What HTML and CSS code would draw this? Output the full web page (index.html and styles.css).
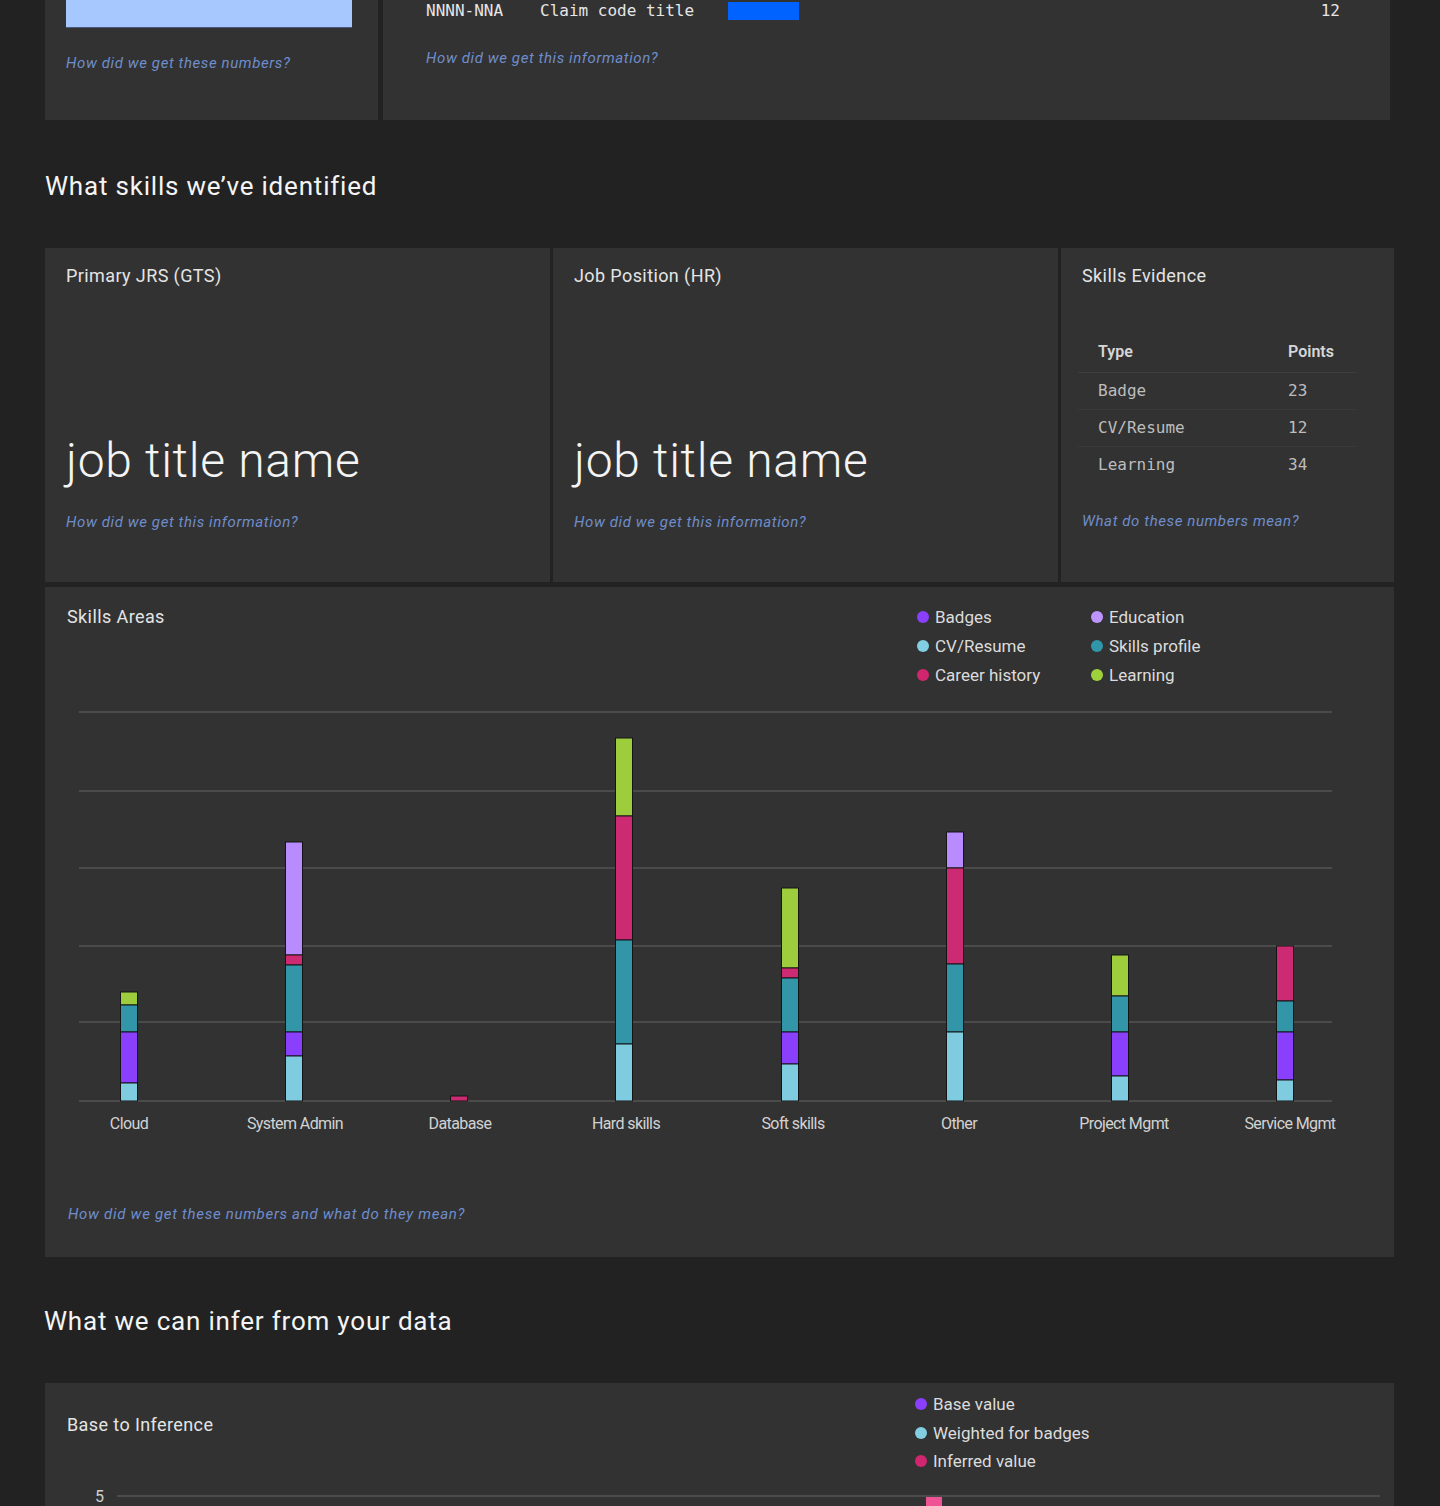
FILE: index.html
```html
<!DOCTYPE html>
<html lang="en">
<head>
<meta charset="utf-8">
<title>Skills summary</title>
<link rel="stylesheet" href="styles.css">
</head>
<body>
<main class="page">
  <section class="top-row">
    <div class="card card-small">
      <div class="light-bar"></div>
      <a class="info-link link-top-left">How did we get these numbers?</a>
    </div>
    <div class="card card-claim">
      <div class="claim-row">
        <span class="mono claim-code">NNNN-NNA</span>
        <span class="mono claim-title">Claim code title</span>
        <span class="claim-bar"></span>
        <span class="mono claim-num">12</span>
      </div>
      <a class="info-link link-top-right">How did we get this information?</a>
    </div>
  </section>

  <h2 class="section-heading heading-skills">What skills we’ve identified</h2>

  <section class="cards-row">
    <div class="card card-job">
      <h3 class="card-title">Primary JRS (GTS)</h3>
      <p class="job-title">job title name</p>
      <a class="info-link">How did we get this information?</a>
    </div>
    <div class="card card-job">
      <h3 class="card-title">Job Position (HR)</h3>
      <p class="job-title">job title name</p>
      <a class="info-link">How did we get this information?</a>
    </div>
    <div class="card card-evidence">
      <h3 class="card-title">Skills Evidence</h3>
      <table class="evidence-table">
        <thead>
          <tr><th>Type</th><th>Points</th></tr>
        </thead>
        <tbody>
          <tr><td class="mono">Badge</td><td class="mono">23</td></tr>
          <tr><td class="mono">CV/Resume</td><td class="mono">12</td></tr>
          <tr><td class="mono">Learning</td><td class="mono">34</td></tr>
        </tbody>
      </table>
      <a class="info-link">What do these numbers mean?</a>
    </div>
  </section>

  <section class="card card-areas">
    <div class="areas-head">
      <h3 class="card-title">Skills Areas</h3>
      <ul class="legend legend-grid">
        <li><span class="dot c-purple"></span>Badges</li>
        <li><span class="dot c-lavender"></span>Education</li>
        <li><span class="dot c-light"></span>CV/Resume</li>
        <li><span class="dot c-teal"></span>Skills profile</li>
        <li><span class="dot c-pink"></span>Career history</li>
        <li><span class="dot c-green"></span>Learning</li>
      </ul>
    </div>
    <svg class="areas-chart" width="1349" height="450" viewBox="0 0 1349 450">
      <g class="grid">
        <line x1="34" x2="1287" y1="23" y2="23"/>
        <line x1="34" x2="1287" y1="102" y2="102"/>
        <line x1="34" x2="1287" y1="179" y2="179"/>
        <line x1="34" x2="1287" y1="257" y2="257"/>
        <line x1="34" x2="1287" y1="333" y2="333"/>
        <line x1="34" x2="1287" y1="412" y2="412"/>
      </g>
      <g class="bars">
        <!-- Cloud -->
        <rect class="s-green" x="75.5" y="303" width="17" height="13"/>
        <rect class="s-teal" x="75.5" y="316" width="17" height="27"/>
        <rect class="s-purple" x="75.5" y="343" width="17" height="51"/>
        <rect class="s-light" x="75.5" y="394" width="17" height="18"/>
        <!-- System Admin -->
        <rect class="s-lavender" x="240.5" y="153" width="17" height="113"/>
        <rect class="s-pink" x="240.5" y="266" width="17" height="10"/>
        <rect class="s-teal" x="240.5" y="276" width="17" height="67"/>
        <rect class="s-purple" x="240.5" y="343" width="17" height="24"/>
        <rect class="s-light" x="240.5" y="367" width="17" height="45"/>
        <!-- Database -->
        <rect class="s-pink" x="405.5" y="407" width="17" height="5"/>
        <!-- Hard skills -->
        <rect class="s-green" x="570.5" y="49" width="17" height="78"/>
        <rect class="s-pink" x="570.5" y="127" width="17" height="124"/>
        <rect class="s-teal" x="570.5" y="251" width="17" height="104"/>
        <rect class="s-light" x="570.5" y="355" width="17" height="57"/>
        <!-- Soft skills -->
        <rect class="s-green" x="736.5" y="199" width="17" height="80"/>
        <rect class="s-pink" x="736.5" y="279" width="17" height="10"/>
        <rect class="s-teal" x="736.5" y="289" width="17" height="54"/>
        <rect class="s-purple" x="736.5" y="343" width="17" height="32"/>
        <rect class="s-light" x="736.5" y="375" width="17" height="37"/>
        <!-- Other -->
        <rect class="s-lavender" x="901.5" y="143" width="17" height="36"/>
        <rect class="s-pink" x="901.5" y="179" width="17" height="96"/>
        <rect class="s-teal" x="901.5" y="275" width="17" height="68"/>
        <rect class="s-light" x="901.5" y="343" width="17" height="69"/>
        <!-- Project Mgmt -->
        <rect class="s-green" x="1066.5" y="266" width="17" height="41"/>
        <rect class="s-teal" x="1066.5" y="307" width="17" height="36"/>
        <rect class="s-purple" x="1066.5" y="343" width="17" height="44"/>
        <rect class="s-light" x="1066.5" y="387" width="17" height="25"/>
        <!-- Service Mgmt -->
        <rect class="s-pink" x="1231.5" y="257" width="17" height="55"/>
        <rect class="s-teal" x="1231.5" y="312" width="17" height="31"/>
        <rect class="s-purple" x="1231.5" y="343" width="17" height="48"/>
        <rect class="s-light" x="1231.5" y="391" width="17" height="21"/>
      </g>
      <g class="axis-labels">
        <text x="84" y="440">Cloud</text>
        <text x="250" y="440">System Admin</text>
        <text x="415" y="440">Database</text>
        <text x="581" y="440">Hard skills</text>
        <text x="748" y="440">Soft skills</text>
        <text x="914" y="440">Other</text>
        <text x="1079" y="440">Project Mgmt</text>
        <text x="1245" y="440">Service Mgmt</text>
      </g>
    </svg>
    <a class="info-link link-areas">How did we get these numbers and what do they mean?</a>
  </section>

  <h2 class="section-heading heading-infer">What we can infer from your data</h2>

  <section class="card card-inference">
    <div class="inference-head">
      <h3 class="card-title inference-title">Base to Inference</h3>
      <ul class="legend legend-list">
        <li><span class="dot c-purple"></span>Base value</li>
        <li><span class="dot c-light"></span>Weighted for badges</li>
        <li><span class="dot c-pink"></span>Inferred value</li>
      </ul>
    </div>
    <svg class="inference-chart" width="1349" height="200" viewBox="0 0 1349 200">
      <text class="y-label" x="50" y="26">5</text>
      <line class="grid-line" x1="72" x2="1335" y1="20" y2="20"/>
      <rect class="s-pinkbright" x="881" y="21" width="16" height="60"/>
    </svg>
  </section>
</main>
</body>
</html>
```

FILE: styles.css
```css
* {
  box-sizing: border-box;
}

html, body {
  margin: 0;
  padding: 0;
  background: #222222;
}

body {
  font-family: Roboto, "Noto Sans", "Liberation Sans", sans-serif;
  color: #f2f2f2;
  overflow: hidden;
}

.page {
  width: 1440px;
  padding-left: 45px;
}

.mono {
  font-family: "DejaVu Sans Mono", "Liberation Mono", monospace;
}

.card {
  background: #323232;
}

.info-link {
  display: block;
  font-style: italic;
  font-size: 15px;
  line-height: 20px;
  letter-spacing: 0.6px;
  color: #6f8dcb;
  text-decoration: none;
}

/* ---------- top row ---------- */
.top-row {
  display: flex;
  gap: 5px;
  height: 120px;
}

.card-small {
  width: 333px;
  padding: 0 26px 0 21px;
}

.light-bar {
  height: 28px;
  background: #a6c8ff;
  border-bottom: 1px solid #4a5a78;
}

.link-top-left {
  margin-top: 25px;
}

.card-claim {
  width: 1007px;
  padding: 0 50px 0 43px;
}

.claim-row {
  display: flex;
  align-items: center;
  height: 21px;
  font-size: 16px;
  color: #e6e6e6;
}

.claim-code {
  width: 114px;
}

.claim-title {
  width: 188px;
}

.claim-bar {
  width: 71px;
  height: 18px;
  background: #0062ff;
  margin-top: 1px;
}

.claim-num {
  margin-left: auto;
}

.link-top-right {
  margin-top: 27px;
}

/* ---------- headings ---------- */
.section-heading {
  margin: 0;
  font-size: 26px;
  line-height: 32px;
  font-weight: 400;
  letter-spacing: 0.8px;
  color: #f4f4f4;
}

.heading-skills {
  margin-top: 50px;
  margin-bottom: 46px;
}

.heading-infer {
  margin-top: 48px;
  margin-bottom: 46px;
  margin-left: -1px;
}

/* ---------- cards row ---------- */
.cards-row {
  display: flex;
  gap: 3px;
  height: 334px;
}

.card-title {
  margin: 0;
  font-size: 18px;
  line-height: 24px;
  font-weight: 400;
  letter-spacing: 0.4px;
  color: #e4e4e4;
}

.card-job {
  width: 505px;
  padding: 16px 21px 0;
  display: flex;
  flex-direction: column;
}

.job-title {
  margin: 145px 0 0;
  font-size: 48px;
  line-height: 56px;
  font-weight: 300;
  letter-spacing: 0.7px;
  color: #f4f4f4;
}

.card-job .info-link {
  margin-top: 23px;
}

.card-evidence {
  width: 333px;
  padding: 16px 21px 0;
}

.evidence-table {
  width: 278px;
  margin: 43px 0 0 -4px;
  border-collapse: collapse;
}

.evidence-table th,
.evidence-table td {
  text-align: left;
  padding: 0 0 0 20px;
}

.evidence-table th:first-child,
.evidence-table td:first-child {
  width: 190px;
}

.evidence-table th {
  height: 41px;
  font-size: 16px;
  font-weight: 600;
  color: #d6d6d6;
  border-bottom: 1px solid #3e3e3e;
}

.evidence-table td {
  height: 37px;
  font-size: 16px;
  color: #bdbdbd;
}

.evidence-table tbody tr + tr td {
  border-top: 1px solid #3a3a3a;
}

.card-evidence .info-link {
  margin-top: 28px;
}

/* ---------- skills areas ---------- */
.card-areas {
  margin-top: 5px;
  width: 1349px;
  height: 670px;
  padding-top: 15px;
}

.areas-head {
  display: flex;
  align-items: flex-start;
  padding-left: 22px;
}

.areas-head .card-title {
  margin-top: 3px;
  width: 850px;
}

.legend {
  list-style: none;
  margin: 0;
  padding: 0;
  font-size: 17px;
  color: #dcdcdc;
}

.legend li {
  display: flex;
  align-items: center;
  height: 29px;
}

.legend-grid {
  display: grid;
  grid-template-columns: 174px 174px;
}

.dot {
  width: 12px;
  height: 12px;
  border-radius: 50%;
  margin-right: 6px;
  flex: none;
}

.c-purple { background: #8a3ffc; }
.c-lavender { background: #be95ff; }
.c-light { background: #82cfe3; }
.c-teal { background: #3097aa; }
.c-pink { background: #d02670; }
.c-green { background: #9fd13c; }

.areas-chart {
  display: block;
}

.grid line {
  stroke: #4b4b4b;
  stroke-width: 2;
}

.bars rect {
  stroke: #151515;
  stroke-width: 1;
}

.s-purple { fill: #8a3ffc; }
.s-lavender { fill: #b88cff; }
.s-light { fill: #7fcbdf; }
.s-teal { fill: #3295a8; }
.s-pink { fill: #cc2a72; }
.s-green { fill: #9dcc3c; }
.s-pinkbright { fill: #ee5396; }

.axis-labels text {
  font-family: Roboto, "Noto Sans", sans-serif;
  font-size: 16px;
  fill: #d2d2d2;
  text-anchor: middle;
  letter-spacing: -0.6px;
}

.link-areas {
  margin: 65px 0 0 23px;
  letter-spacing: 0.7px;
}

/* ---------- inference ---------- */
.card-inference {
  width: 1349px;
  height: 300px;
  padding-top: 7px;
}

.inference-head {
  display: flex;
  align-items: flex-start;
  padding-left: 22px;
}

.inference-title {
  margin-top: 23px;
  width: 848px;
}

.legend-list li {
  height: 28.5px;
}

.inference-chart {
  display: block;
}

.y-label {
  font-family: Roboto, "Noto Sans", sans-serif;
  font-size: 16px;
  fill: #d0d0d0;
}

.grid-line {
  stroke: #4b4b4b;
  stroke-width: 2;
}
```
